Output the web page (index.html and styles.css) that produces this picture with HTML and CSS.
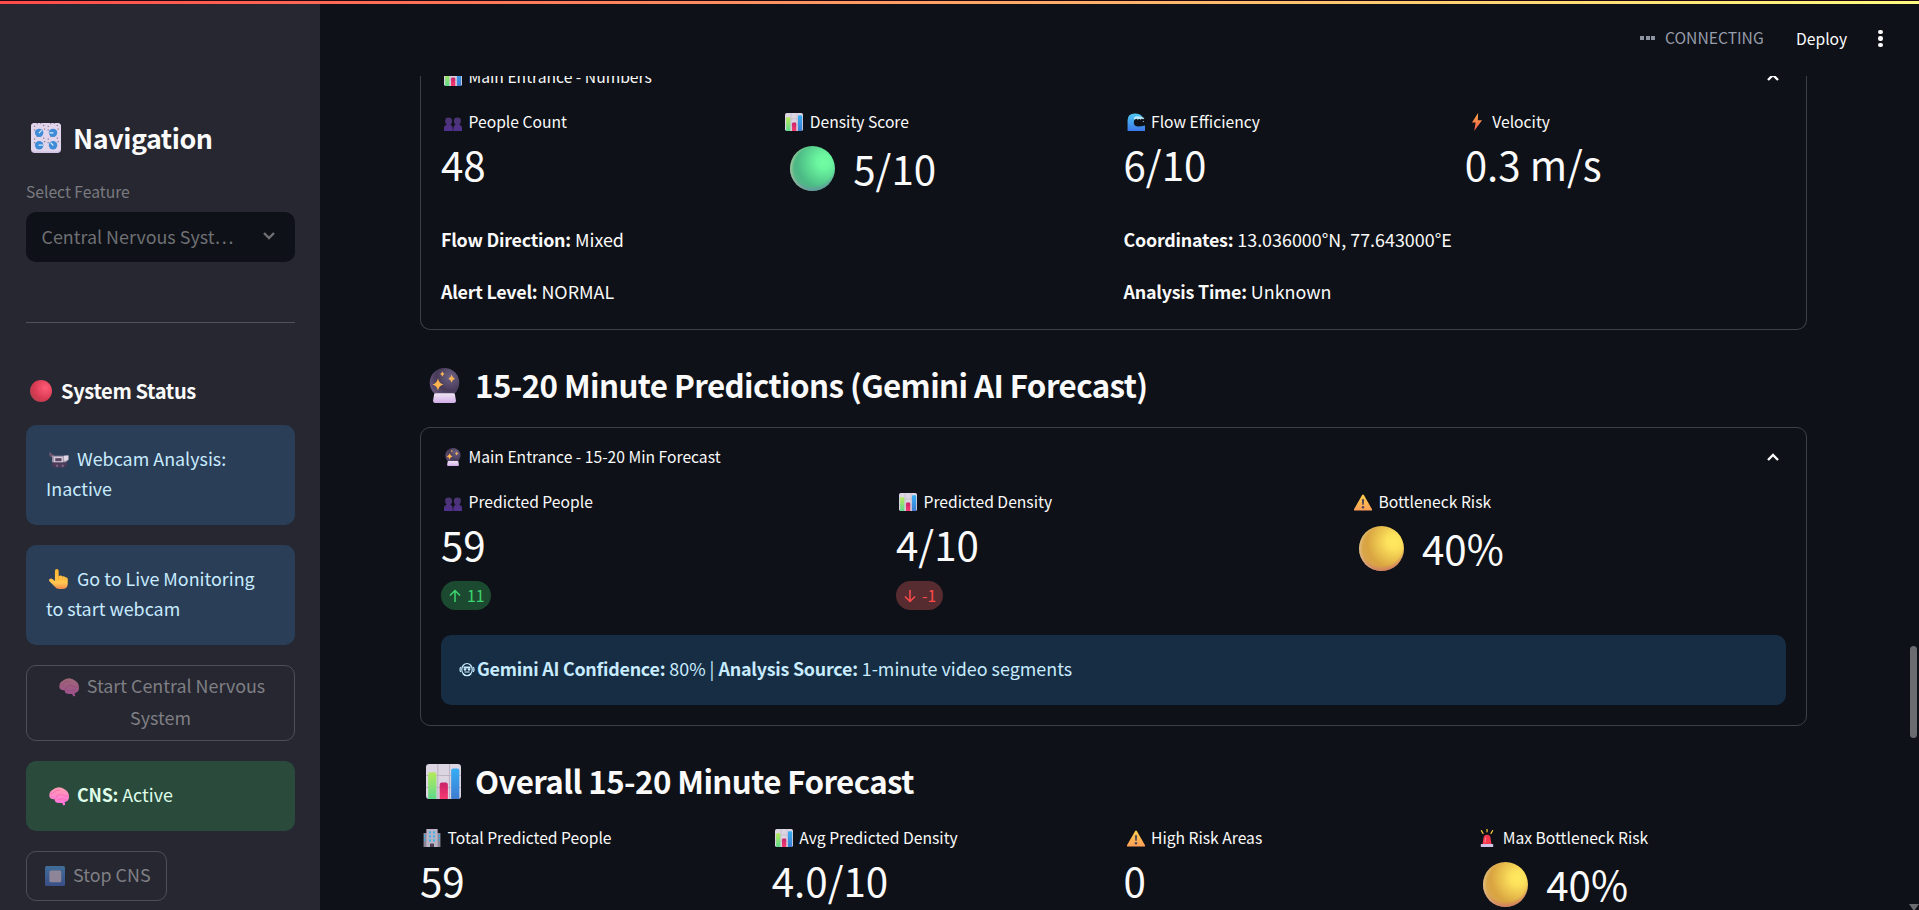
FILE: index.html
```html
<!DOCTYPE html>
<html lang="en">
<head>
<meta charset="utf-8">
<title>Central Nervous System</title>
<link rel="stylesheet" href="styles.css">
</head>
<body>
<svg class="sprite" aria-hidden="true">
  <defs>
    <linearGradient id="g-lime" x1="0" y1="0" x2="0" y2="1"><stop offset="0" stop-color="#b5ea5a"/><stop offset="1" stop-color="#5fd98c"/></linearGradient>
    <linearGradient id="g-pink" x1="0" y1="0" x2="0" y2="1"><stop offset="0" stop-color="#c9246b"/><stop offset="1" stop-color="#f8396f"/></linearGradient>
    <linearGradient id="g-blue" x1="0" y1="0" x2="0" y2="1"><stop offset="0" stop-color="#37aef5"/><stop offset="1" stop-color="#3e7bd0"/></linearGradient>
    <radialGradient id="g-green" cx=".76" cy=".35" r=".8"><stop offset="0" stop-color="#72fda4"/><stop offset=".2" stop-color="#6bf69f"/><stop offset=".75" stop-color="#4cba85"/><stop offset="1" stop-color="#58b68a"/></radialGradient>
    <radialGradient id="g-yellow" cx=".78" cy=".35" r=".8"><stop offset="0" stop-color="#ffe961"/><stop offset=".2" stop-color="#fde25c"/><stop offset=".75" stop-color="#d9a441"/><stop offset="1" stop-color="#d7a650"/></radialGradient>
    <radialGradient id="g-rim-green" cx=".5" cy=".4" r=".6"><stop offset=".8" stop-color="#6a8fa8" stop-opacity="0"/><stop offset="1" stop-color="#6a8fa8" stop-opacity=".8"/></radialGradient>
    <radialGradient id="g-rim-yellow" cx=".5" cy=".4" r=".6"><stop offset=".8" stop-color="#d0706e" stop-opacity="0"/><stop offset="1" stop-color="#d0706e" stop-opacity=".8"/></radialGradient>
    <radialGradient id="g-side" cx=".58" cy=".5" r=".58"><stop offset=".85" stop-color="#f0d0a0" stop-opacity="0"/><stop offset="1" stop-color="#e8e0b8" stop-opacity=".5"/></radialGradient>
    <radialGradient id="g-red" cx=".7" cy=".35" r=".75"><stop offset="0" stop-color="#ff5c76"/><stop offset=".7" stop-color="#d83a52"/><stop offset="1" stop-color="#b5404f"/></radialGradient>
    <radialGradient id="g-ball" cx=".7" cy=".3" r=".8"><stop offset="0" stop-color="#6d6285"/><stop offset=".6" stop-color="#473a58"/><stop offset="1" stop-color="#6a5980"/></radialGradient>
    <linearGradient id="g-base" x1="0" y1="0" x2="0" y2="1"><stop offset="0" stop-color="#efe6f3"/><stop offset="1" stop-color="#d2aee8"/></linearGradient>
    <linearGradient id="g-wave" x1="0" y1="0" x2="0" y2="1"><stop offset="0" stop-color="#4fc8f3"/><stop offset="1" stop-color="#3b78e8"/></linearGradient>
    <linearGradient id="g-bolt" x1="0" y1="0" x2="0" y2="1"><stop offset="0" stop-color="#ffb046"/><stop offset="1" stop-color="#f0504c"/></linearGradient>
    <linearGradient id="g-warn" x1="0" y1="0" x2="0" y2="1"><stop offset="0" stop-color="#ffcf4a"/><stop offset="1" stop-color="#ff9f58"/></linearGradient>
    <linearGradient id="g-hand" x1="0" y1="0" x2="0" y2="1"><stop offset="0" stop-color="#ffb62e"/><stop offset=".7" stop-color="#ffc651"/><stop offset="1" stop-color="#f28a4d"/></linearGradient>
    <linearGradient id="g-brain" x1="0" y1="0" x2="0" y2="1"><stop offset="0" stop-color="#ff9fb0"/><stop offset="1" stop-color="#ff6fe0"/></linearGradient>
    <linearGradient id="g-stop" x1="0" y1="0" x2="0" y2="1"><stop offset="0" stop-color="#58a8f0"/><stop offset="1" stop-color="#4a6fd0"/></linearGradient>
    <linearGradient id="g-people" x1="0" y1="0" x2="0" y2="1"><stop offset="0" stop-color="#4a3570"/><stop offset="1" stop-color="#51308c"/></linearGradient>
  </defs>
  <symbol id="i-bars" viewBox="0 0 32 32">
    <rect width="32" height="32" rx="3" fill="#dcd5e2"/>
    <path d="M0 10.500H32M0 21.500H32M10.800 0V32M21.500 0V32" stroke="#bdb4c6" stroke-width="1"/>
    <path d="M2 32V9.500q0-2 2-2h3.500q2 0 2 2V32z" fill="url(#g-lime)"/>
    <path d="M12.500 32V19q0-2 2-2H18q2 0 2 2V32z" fill="url(#g-pink)"/>
    <path d="M23 32V6q0-2 2-2h3.500q2 0 2 2V32z" fill="url(#g-blue)"/>
  </symbol>
  <symbol id="i-people" viewBox="0 0 32 32">
    <g fill="url(#g-people)"><path d="M0 32v-5q0-5 5-6-3-2-3-7 0-6 6-6t6.500 6q0 5-3 7 4 1 4 6v5z"/><path d="M16.500 32v-5q0-5 4-6-3-2-3-7 0-6 6.500-6t6 6q0 5-3 7 5 1 5 6v5z"/></g>
  </symbol>
  <symbol id="i-green" viewBox="0 0 32 32"><circle cx="16" cy="16" r="16" fill="url(#g-green)"/><circle cx="16" cy="16" r="16" fill="url(#g-rim-green)"/><circle cx="16" cy="16" r="16" fill="url(#g-side)"/></symbol>
  <symbol id="i-yellow" viewBox="0 0 32 32"><circle cx="16" cy="16" r="16" fill="url(#g-yellow)"/><circle cx="16" cy="16" r="16" fill="url(#g-rim-yellow)"/><circle cx="16" cy="16" r="16" fill="url(#g-side)"/></symbol>
  <symbol id="i-red" viewBox="0 0 32 32"><circle cx="16" cy="16" r="16" fill="url(#g-red)"/></symbol>
  <symbol id="i-crystal" viewBox="0 0 32 32">
    <circle cx="16" cy="13.500" r="13.500" fill="url(#g-ball)"/>
    <path d="M6.500 24q0-1 2-1h15q2 0 2 1l1 6q0 2-2 2h-17q-2 0-2-2z" fill="url(#g-base)"/>
    <path d="M10 9.500q1 4.500 5 5.500-4 1-5 5.500-1-4.500-5-5.500 4-1 5-5.500z" fill="#ffb44d"/>
    <path d="M22.500 6q.6 3 3 3.800-2.400.8-3 3.700-.6-2.900-3-3.700 2.400-.8 3-3.800zM14 3q.5 2 2 2.500-1.500.5-2 2.500-.5-2-2-2.500 1.500-.5 2-2.500z" fill="#f7b257"/>
  </symbol>
  <symbol id="i-wave" viewBox="0 0 32 32">
    <path d="M1 32V13Q1 1 14 1q9 0 14 6l-4 3-7-1q-5 2-5 7 0 8 8 8 5 0 12-2v10z" fill="url(#g-wave)"/>
    <path d="M12 8q6-4 14-1l5 2-2 2-3-1-2 2-2-2-3 2-2-2-4 2z" fill="#b9e9fb"/><circle cx="29" cy="15" r="1" fill="#b9e9fb"/>
  </symbol>
  <symbol id="i-bolt" viewBox="0 0 32 32"><path d="M18 0 7 17h6.500L11 32l14-19h-7.500z" fill="url(#g-bolt)"/></symbol>
  <symbol id="i-warn" viewBox="0 0 32 32">
    <path d="M14 4.500q2-3.500 4 0L32 29q1 2-1.500 2h-29Q-1 31 0 29z" fill="url(#g-warn)"/>
    <path d="M14 11h4l-.6 10h-2.800z" fill="#4d4458"/><circle cx="16" cy="25.500" r="2.200" fill="#4d4458"/>
  </symbol>
  <symbol id="i-building" viewBox="0 0 32 32">
    <path d="M1 7h8v25H1zM23 7h8v25h-8z" fill="#8b8799"/><rect x="6" width="20" height="32" fill="#b9b3c4"/>
    <path d="M11 4h3v4h-3zM18 4h3v4h-3zM11 11h3v4h-3zM18 11h3v4h-3zM11 18h3v4h-3zM18 18h3v4h-3zM2 10h2v4H2zM2 17h2v4H2zM28 10h2v4h-2zM28 17h2v4h-2z" fill="#29b4f4"/>
    <rect x="12.500" y="26" width="7" height="6" fill="#4a4058"/>
  </symbol>
  <symbol id="i-siren" viewBox="0 0 32 32">
    <path d="M16 0v5M6 3l3 5M26 3l-3 5" stroke="#ffc83d" stroke-width="2.200" stroke-linecap="round"/>
    <path d="M8 27 10 14q1-4 6-4t6 4l2 13z" fill="#f7384d"/><path d="M12.500 24l1-9" stroke="#ff8090" stroke-width="2"/>
    <rect x="5" y="26.500" width="22" height="5.500" rx="1" fill="#cfc4e6"/>
  </symbol>
  <symbol id="i-knobs" viewBox="0 0 32 32">
    <rect width="32" height="32" rx="4" fill="#d3c3e6"/><rect width="32" height="30" rx="4" fill="#e0d5ea"/>
    <g fill="none" stroke="#85798f" stroke-width="1.300" stroke-dasharray="1.200 2.700"><path d="M4 8a5.500 5.500 0 1 1 10 0M18.500 8a5.500 5.500 0 1 1 10 0M4 21.500a5.500 5.500 0 1 1 10 0M18.500 21.500a5.500 5.500 0 1 1 10 0"/></g>
    <g fill="#3f8bd8"><circle cx="8.700" cy="10.500" r="4.500"/><circle cx="23.500" cy="10.500" r="4.500"/><circle cx="8.700" cy="23.700" r="4.500"/><circle cx="23.500" cy="23.700" r="4.500"/></g>
    <path d="M8.700 10.500l2.400-2.400M23.500 10.500H20M8.700 23.700h3.500M23.500 23.700l-2.300-2.500" stroke="#d9eefc" stroke-width="1.300" stroke-linecap="round"/>
  </symbol>
  <symbol id="i-camera" viewBox="0 0 32 32">
    <path d="M0 4h3l2 3h3v4H2q-2-2-2-7z" fill="#6a566f"/><path d="M5 9h19l7-1v8l-5 4H5z" fill="#a79bb0"/>
    <rect x="8" y="11" width="14" height="9" rx="1" fill="#d8ccdc"/><rect x="10" y="13" width="10" height="5" fill="#5a4662"/>
    <path d="M24 9h7v6l-4 2h-3z" fill="#ded6e2"/><path d="M5 20h24l-1 5q-1 3-4 3H9q-4 0-4-4z" fill="#4c3a58"/><circle cx="13" cy="25" r="2" fill="#776285"/><circle cx="22" cy="25" r="2" fill="#776285"/>
  </symbol>
  <symbol id="i-hand" viewBox="0 0 32 32">
    <path d="M9.500 19V3q0-3 3-3t3 3v9q1-2 3.500-1.500 2 .5 2.500 1.500 3-1 4.500 1.200 3-.7 4 2.300v8q0 8.500-9 8.500h-4q-5 0-8-4L1 20q-2-3 .5-4.500 2-1 4 .5z" fill="url(#g-hand)"/>
    <path d="M15.500 12v6M21.500 13v4M26 14v3" stroke="#f3a02d" stroke-width="1"/>
  </symbol>
  <symbol id="i-brain" viewBox="0 0 32 32">
    <path d="M1 18Q-1 10 6 6q4-4 10-4t10 4q6 4 6 11 0 6-5 8l-2 1 1 4-3 1-2-4q-7 1-10-1-2-2-2-5-6 1-8-3z" fill="url(#g-brain)"/>
    <path d="M3 13q4-1 6-4 4-3 8-2M9 21q3-2 4-6 5-4 10 0 4 2 8 1M14 21q4 2 8-1 3 3 6 2" fill="none" stroke="#f062ab" stroke-width="1"/>
  </symbol>
  <symbol id="i-stop" viewBox="0 0 32 32"><rect width="32" height="32" rx="2.500" fill="url(#g-stop)"/><rect x="7" y="7" width="19" height="19" rx="2.500" fill="#e3d3ef"/></symbol>
  <symbol id="i-robot" viewBox="0 0 32 32">
    <g fill="none" stroke="#c7ebff" stroke-width="2.400"><ellipse cx="16" cy="15" rx="10.500" ry="12"/><path d="M3.500 10q-3 5 0 10M28.500 10q3 5 0 10M8 24q8 7 16 0"/></g>
    <path d="M9 9h14v4H9z" fill="#c7ebff"/><circle cx="12" cy="15" r="2.500" fill="#c7ebff"/><circle cx="20" cy="15" r="2.500" fill="#c7ebff"/><path d="M11 20h10" stroke="#c7ebff" stroke-width="2.200"/>
  </symbol>
</svg>

<div class="app">
  <aside class="sidebar">
    <h2 class="nav-title"><svg class="ic"><use href="#i-knobs"/></svg><span>Navigation</span></h2>
    <div class="field-label">Select Feature</div>
    <div class="select"><span>Central Nervous Syst…</span>
      <svg class="chev" viewBox="0 0 14 10"><path d="M2 2l5 5 5-5" fill="none" stroke="currentColor" stroke-width="2.400"/></svg>
    </div>
    <div class="rule"></div>
    <h3 class="status-title"><svg class="ic"><use href="#i-red"/></svg><span>System Status</span></h3>
    <div class="note blue"><svg class="ic"><use href="#i-camera"/></svg>Webcam Analysis:<br>Inactive</div>
    <div class="note blue"><svg class="ic hand"><use href="#i-hand"/></svg>Go to Live Monitoring<br>to start webcam</div>
    <div class="btn wide"><svg class="ic"><use href="#i-brain"/></svg>Start Central Nervous<br>System</div>
    <div class="note green"><svg class="ic"><use href="#i-brain"/></svg><b>CNS:</b> Active</div>
    <div class="btn stop"><svg class="ic"><use href="#i-stop"/></svg>Stop CNS</div>
  </aside>

  <div class="page">
    <header class="topbar">
      <span class="dots"><i></i><i></i><i></i></span>
      <span class="connecting">CONNECTING</span>
      <span class="deploy">Deploy</span>
      <span class="kebab"><i></i><i></i><i></i></span>
    </header>
    <main class="scroll">
      <section class="card first">
        <div class="card-head"><span class="label"><svg class="ic"><use href="#i-bars"/></svg>Main Entrance - Numbers</span>
          <svg class="chev" viewBox="0 0 14 10"><path d="M2 8l5-5 5 5" fill="none" stroke="currentColor" stroke-width="2.400"/></svg></div>
        <div class="grid four">
          <div class="metric"><div class="label"><svg class="ic"><use href="#i-people"/></svg>People Count</div><div class="value">48</div></div>
          <div class="metric"><div class="label"><svg class="ic"><use href="#i-bars"/></svg>Density Score</div><div class="value ball"><svg class="ic"><use href="#i-green"/></svg>5/10</div></div>
          <div class="metric"><div class="label"><svg class="ic"><use href="#i-wave"/></svg>Flow Efficiency</div><div class="value">6/10</div></div>
          <div class="metric"><div class="label"><svg class="ic"><use href="#i-bolt"/></svg>Velocity</div><div class="value">0.3 m/s</div></div>
        </div>
        <div class="grid facts">
          <p><b>Flow Direction:</b> Mixed</p><p><b>Coordinates:</b> 13.036000°N, 77.643000°E</p>
          <p><b>Alert Level:</b> NORMAL</p><p><b>Analysis Time:</b> Unknown</p>
        </div>
      </section>

      <h2 class="title t1"><svg class="ic"><use href="#i-crystal"/></svg><span>15-20 Minute Predictions (Gemini AI Forecast)</span></h2>
      <section class="card second">
        <div class="card-head"><span class="label"><svg class="ic"><use href="#i-crystal"/></svg>Main Entrance - 15-20 Min Forecast</span>
          <svg class="chev" viewBox="0 0 14 10"><path d="M2 8l5-5 5 5" fill="none" stroke="currentColor" stroke-width="2.400"/></svg></div>
        <div class="grid three">
          <div class="metric"><div class="label"><svg class="ic"><use href="#i-people"/></svg>Predicted People</div><div class="value">59</div>
            <div class="pill up"><svg viewBox="0 0 14 14"><path d="M7 13V2M2 6.500 7 1.500l5 5" fill="none" stroke="currentColor" stroke-width="1.500"/></svg>11</div></div>
          <div class="metric"><div class="label"><svg class="ic"><use href="#i-bars"/></svg>Predicted Density</div><div class="value">4/10</div>
            <div class="pill down"><svg viewBox="0 0 14 14"><path d="M7 1v11M2 7.500l5 5 5-5" fill="none" stroke="currentColor" stroke-width="1.500"/></svg>-1</div></div>
          <div class="metric"><div class="label"><svg class="ic"><use href="#i-warn"/></svg>Bottleneck Risk</div><div class="value ball"><svg class="ic"><use href="#i-yellow"/></svg>40%</div></div>
        </div>
        <div class="info"><svg class="robot"><use href="#i-robot"/></svg><b>Gemini AI Confidence:</b> 80% | <b>Analysis Source:</b> 1-minute video segments</div>
      </section>

      <h2 class="title t2"><svg class="ic"><use href="#i-bars"/></svg><span>Overall 15-20 Minute Forecast</span></h2>
      <div class="grid four overall">
        <div class="metric"><div class="label"><svg class="ic"><use href="#i-building"/></svg>Total Predicted People</div><div class="value">59</div></div>
        <div class="metric"><div class="label"><svg class="ic"><use href="#i-bars"/></svg>Avg Predicted Density</div><div class="value">4.0/10</div></div>
        <div class="metric"><div class="label"><svg class="ic"><use href="#i-warn"/></svg>High Risk Areas</div><div class="value">0</div></div>
        <div class="metric"><div class="label"><svg class="ic"><use href="#i-siren"/></svg>Max Bottleneck Risk</div><div class="value ball"><svg class="ic"><use href="#i-yellow"/></svg>40%</div></div>
      </div>
    </main>
  </div>
</div>
<div class="decoration"></div>
<div class="thumb"></div>
<div class="arrow"></div>
</body>
</html>
```
FILE: styles.css
```css
* { box-sizing: border-box; }
body {
  margin: 0;
  height: 910px;
  overflow: hidden;
  background: #0e1117;
  color: #fafafa;
  font-family: "Noto Sans CJK SC", "Noto Sans", sans-serif;
  font-size: 17.9px;
  line-height: 30px;
}
h2, h3, p { margin: 0; }
b, h2, h3 { font-weight: 600; }
b { letter-spacing: -.24px; }
.sprite { position: absolute; width: 0; height: 0; }
.ic { flex: none; }
.app { display: flex; height: 910px; }

/* sidebar */
.sidebar {
  flex: none;
  width: 320px;
  height: 910px;
  padding: 118px 25px 0 26px;
  background: #262730;
  overflow: hidden;
}
.nav-title { display: flex; align-items: center; height: 40px; padding-left: 5px; gap: 12px; font-size: 26.9px; line-height: 40px; letter-spacing: -.45px; }
.nav-title .ic { width: 30px; height: 30px; }
.field-label { margin-top: 21px; height: 26px; font-size: 15.67px; line-height: 26px; color: #7b7b80; }
.select {
  display: flex; align-items: center; justify-content: space-between;
  margin-top: 7px; height: 50px; padding: 0 19px 3px 15.500px;
  border-radius: 10px; background: #0e1117; color: #6e7074;
}
.chev { width: 14px; height: 10px; flex: none; }
.select .chev { margin-top: 1px; }
.rule { margin-top: 60px; height: 1px; background: #51525a; }
.status-title { display: flex; align-items: center; margin: 53px 0 19px; height: 30px; padding-left: 4px; gap: 9px; font-size: 20.1px; letter-spacing: -.38px; }
.status-title .ic { width: 22px; height: 22px; }
.note { padding: 18px 20px; margin-bottom: 20px; border-radius: 10px; white-space: nowrap; }
.note .ic, .btn .ic { width: 20px; height: 20px; margin: 0 8px 0 3px; vertical-align: -4px; }
.note .hand { vertical-align: -3px; }
.note.blue { height: 100px; background: #2b3e57; color: #c7ebff; }
.note.green { height: 70px; background: #2a4a3b; color: #dffde9; }
.btn { border: 1px solid #4e4f57; border-radius: 10px; color: #7f7f85; white-space: nowrap; }
.btn .ic { opacity: .55; }
.btn.wide { height: 76px; padding-top: 3px; margin-bottom: 20px; text-align: center; line-height: 32px; }
.btn.stop { width: 141px; height: 50px; padding: 6px 15px; line-height: 32px; }

/* top bar */
.page { flex: 1; min-width: 0; }
.topbar { display: flex; align-items: center; height: 76px; padding-left: 1320px; font-size: 15.67px; }
.dots { display: flex; gap: 1.500px; width: 25px; }
.dots i { width: 4px; height: 4.500px; background: #8f94a3; }
.connecting { width: 131px; color: #989dab; }
.deploy { width: 82px; padding-top: 2px; }
.kebab { display: flex; flex-direction: column; gap: 2px; padding-top: 1px; }
.kebab i { width: 4.500px; height: 4.500px; border-radius: 50%; background: #fafafa; }

/* content */
.scroll { height: 834px; padding-left: 100px; overflow: hidden; }
.card { width: 1387px; border: 1px solid #3d4045; border-radius: 10px; padding: 0 20px; }
.card.first { height: 265px; margin-top: -11px; border-top: 0; border-radius: 0 0 10px 10px; }
.card.second { height: 299px; padding-top: 17px; }
.card-head { display: flex; justify-content: space-between; align-items: center; height: 24px; padding-right: 6px; }
.label { display: flex; align-items: center; height: 24px; padding-left: 3px; gap: 6.500px; font-size: 15.67px; line-height: 24px; white-space: nowrap; }
.label .ic { width: 18px; height: 18px; }
.grid { display: grid; column-gap: 20px; }
.four { grid-template-columns: repeat(4, 1fr); }
.three { grid-template-columns: repeat(3, 1fr); }
.card .grid { margin-top: 21px; }
.value { margin-top: 3px; height: 54px; font-size: 40.3px; line-height: 54px; white-space: nowrap; }
.value.ball { display: flex; margin-top: 7px; padding-left: 8px; gap: 18px; }
.value .ic { width: 45px; height: 45px; margin-top: 5px; }
.card .facts { grid-template-columns: 1fr 1fr; row-gap: 22px; margin-top: 29px; }
.title { display: flex; align-items: center; height: 42px; font-size: 31.3px; line-height: 42px; letter-spacing: -.59px; white-space: nowrap; }
.t1 { margin: 34px 0 21px; padding-left: 7px; gap: 13px; }
.t2 { margin: 34px 0 24px; padding-left: 6px; gap: 14px; }
.title .ic { width: 35px; height: 35px; }
.pill { display: inline-flex; align-items: center; height: 29px; margin-top: 10px; padding: 0 7px; gap: 5px; border-radius: 15px; font-size: 15.67px; }
.pill svg { width: 14px; height: 14px; }
.up { background: #1c4a31; color: #3dd56d; }
.down { background: #572c31; color: #ff4b4b; }
.info { height: 70px; margin-top: 25px; padding: 18px 18px; border-radius: 10px; background: #172d43; color: #c7ebff; white-space: nowrap; }
.robot { width: 16px; height: 16px; margin-right: 2px; vertical-align: -2px; }
.overall { width: 1387px; }

/* window overlays */
.decoration { position: absolute; top: 0; left: 0; width: 100%; height: 4px; border-top: 1px solid #230811; background: linear-gradient(90deg, #ff4b4b, #fffd80); }
.thumb { position: absolute; left: 1910px; top: 646px; width: 7px; height: 92px; border-radius: 4px; background: #6b6c70; }
.arrow { position: absolute; left: 1909px; top: 904px; border: 5px solid transparent; border-top: 7px solid #6b6c70; }
```
